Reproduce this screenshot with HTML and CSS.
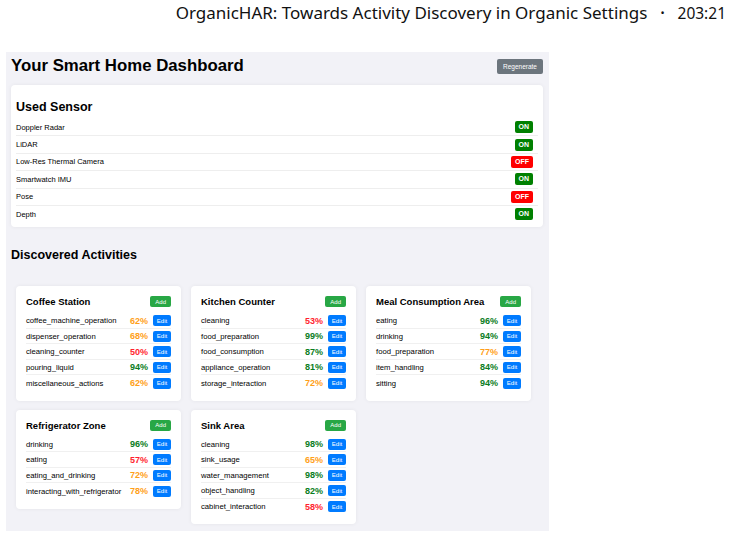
FILE: index.html
```html
<!DOCTYPE html>
<html lang="en">
<head>
    <meta charset="UTF-8">
    <title>Your Smart Home Dashboard</title>
    <link rel="stylesheet" href="styles.css">
</head>
<body>
    <div class="running-head">
        <span>OrganicHAR: Towards Activity Discovery in Organic Settings</span>
        <span class="dot">&bull;</span>
        <span>203:21</span>
    </div>

    <div class="dashboard">
        <div class="dash-head">
            <h1>Your Smart Home Dashboard</h1>
            <button class="btn-regen">Regenerate</button>
        </div>

        <div class="sensor-card">
            <h2>Used Sensor</h2>
            <div class="sensor-row"><span>Doppler Radar</span><span class="badge on">ON</span></div>
            <div class="sensor-row"><span>LiDAR</span><span class="badge on">ON</span></div>
            <div class="sensor-row"><span>Low-Res Thermal Camera</span><span class="badge off">OFF</span></div>
            <div class="sensor-row"><span>Smartwatch IMU</span><span class="badge on">ON</span></div>
            <div class="sensor-row"><span>Pose</span><span class="badge off">OFF</span></div>
            <div class="sensor-row"><span>Depth</span><span class="badge on">ON</span></div>
        </div>

        <h2 class="section-title">Discovered Activities</h2>

        <div class="activity-grid">
            <div class="area-card">
                <div class="area-head"><h3>Coffee Station</h3><button class="btn-add">Add</button></div>
                <div class="act-row"><span class="act-name">coffee_machine_operation</span><span class="pct mid">62%</span><button class="btn-edit">Edit</button></div>
                <div class="act-row"><span class="act-name">dispenser_operation</span><span class="pct mid">68%</span><button class="btn-edit">Edit</button></div>
                <div class="act-row"><span class="act-name">cleaning_counter</span><span class="pct low">50%</span><button class="btn-edit">Edit</button></div>
                <div class="act-row"><span class="act-name">pouring_liquid</span><span class="pct high">94%</span><button class="btn-edit">Edit</button></div>
                <div class="act-row"><span class="act-name">miscellaneous_actions</span><span class="pct mid">62%</span><button class="btn-edit">Edit</button></div>
            </div>

            <div class="area-card">
                <div class="area-head"><h3>Kitchen Counter</h3><button class="btn-add">Add</button></div>
                <div class="act-row"><span class="act-name">cleaning</span><span class="pct low">53%</span><button class="btn-edit">Edit</button></div>
                <div class="act-row"><span class="act-name">food_preparation</span><span class="pct high">99%</span><button class="btn-edit">Edit</button></div>
                <div class="act-row"><span class="act-name">food_consumption</span><span class="pct high">87%</span><button class="btn-edit">Edit</button></div>
                <div class="act-row"><span class="act-name">appliance_operation</span><span class="pct high">81%</span><button class="btn-edit">Edit</button></div>
                <div class="act-row"><span class="act-name">storage_interaction</span><span class="pct mid">72%</span><button class="btn-edit">Edit</button></div>
            </div>

            <div class="area-card">
                <div class="area-head"><h3>Meal Consumption Area</h3><button class="btn-add">Add</button></div>
                <div class="act-row"><span class="act-name">eating</span><span class="pct high">96%</span><button class="btn-edit">Edit</button></div>
                <div class="act-row"><span class="act-name">drinking</span><span class="pct high">94%</span><button class="btn-edit">Edit</button></div>
                <div class="act-row"><span class="act-name">food_preparation</span><span class="pct mid">77%</span><button class="btn-edit">Edit</button></div>
                <div class="act-row"><span class="act-name">item_handling</span><span class="pct high">84%</span><button class="btn-edit">Edit</button></div>
                <div class="act-row"><span class="act-name">sitting</span><span class="pct high">94%</span><button class="btn-edit">Edit</button></div>
            </div>

            <div class="area-card">
                <div class="area-head"><h3>Refrigerator Zone</h3><button class="btn-add">Add</button></div>
                <div class="act-row"><span class="act-name">drinking</span><span class="pct high">96%</span><button class="btn-edit">Edit</button></div>
                <div class="act-row"><span class="act-name">eating</span><span class="pct low">57%</span><button class="btn-edit">Edit</button></div>
                <div class="act-row"><span class="act-name">eating_and_drinking</span><span class="pct mid">72%</span><button class="btn-edit">Edit</button></div>
                <div class="act-row"><span class="act-name">interacting_with_refrigerator</span><span class="pct mid">78%</span><button class="btn-edit">Edit</button></div>
            </div>

            <div class="area-card">
                <div class="area-head"><h3>Sink Area</h3><button class="btn-add">Add</button></div>
                <div class="act-row"><span class="act-name">cleaning</span><span class="pct high">98%</span><button class="btn-edit">Edit</button></div>
                <div class="act-row"><span class="act-name">sink_usage</span><span class="pct mid">65%</span><button class="btn-edit">Edit</button></div>
                <div class="act-row"><span class="act-name">water_management</span><span class="pct high">98%</span><button class="btn-edit">Edit</button></div>
                <div class="act-row"><span class="act-name">object_handling</span><span class="pct high">82%</span><button class="btn-edit">Edit</button></div>
                <div class="act-row"><span class="act-name">cabinet_interaction</span><span class="pct low">58%</span><button class="btn-edit">Edit</button></div>
            </div>
        </div>
    </div>
</body>
</html>
```

FILE: styles.css
```css
body {
    margin: 0;
    background-color: #fff;
    font-family: "Liberation Sans", Arial, sans-serif;
    color: #000;
}
.running-head {
    display: flex;
    justify-content: flex-end;
    align-items: center;
    gap: 13px;
    height: 25px;
    padding-right: 6px;
    font-family: "Noto Sans", sans-serif;
    font-size: 17px;
    color: #111;
}
.running-head .dot {
    font-size: 11px;
}
.running-head span:last-child {
    font-size: 15.5px;
}
.dashboard {
    width: 532px;
    margin: 27px 0 0 6px;
    padding: 5px 6px 7px 5px;
    background-color: #f2f2f7;
}
.dash-head {
    display: flex;
    justify-content: space-between;
    align-items: center;
    height: 18px;
    margin-bottom: 10px;
}
.dash-head h1 {
    margin: 0;
    font-size: 16.8px;
    font-weight: bold;
}
.btn-regen {
    background-color: #6c757d;
    color: #fff;
    border: none;
    border-radius: 2px;
    font-family: inherit;
    font-size: 6.5px;
    padding: 0 6px;
    height: 15px;
}
.sensor-card {
    background-color: #fff;
    border-radius: 4px;
    padding: 15px 5px 5px 5px;
    box-shadow: 0 0 4px rgba(0, 0, 0, 0.06);
}
.sensor-card h2 {
    margin: 0 0 5px 0;
    font-size: 12.5px;
}
.sensor-row {
    display: flex;
    justify-content: space-between;
    align-items: center;
    padding: 2.2px 0;
    border-bottom: 1px solid #eee;
    font-size: 7.5px;
}
.sensor-row:last-child {
    border-bottom: none;
}
.badge {
    color: #fff;
    font-size: 7px;
    font-weight: bold;
    border-radius: 2px;
    height: 12px;
    line-height: 12px;
    padding: 0 4px;
    margin-right: 5px;
}
.badge.on {
    background-color: #008000;
}
.badge.off {
    background-color: #ff0000;
}
.section-title {
    font-size: 12.5px;
    margin: 21px 0 24px 0;
}
.activity-grid {
    display: grid;
    grid-template-columns: repeat(3, 165px);
    gap: 9px 10px;
    padding-left: 5px;
    align-items: start;
}
.area-card {
    background-color: #fff;
    border-radius: 4px;
    padding: 10px 10px 10px 10px;
    box-shadow: 0 0 4px rgba(0, 0, 0, 0.06);
}
.area-head {
    display: flex;
    justify-content: space-between;
    align-items: center;
    margin-bottom: 6px;
}
.area-head h3 {
    margin: 0;
    font-size: 9.5px;
}
.btn-add {
    background-color: #28a745;
    color: #fff;
    border: none;
    border-radius: 2px;
    font-family: inherit;
    font-size: 6px;
    height: 11px;
    padding: 0 5px;
}
.act-row {
    display: flex;
    align-items: center;
    gap: 5px;
    height: 15.5px;
    border-bottom: 1px solid #f0f0f0;
    font-size: 7.7px;
    box-sizing: border-box;
}
.act-row:last-child {
    border-bottom: none;
}
.act-name {
    flex: 1;
    white-space: nowrap;
}
.pct {
    font-weight: bold;
    font-size: 9px;
}
.pct.high {
    color: #0a7d22;
}
.pct.mid {
    color: #ff9f1a;
}
.pct.low {
    color: #ff1f2f;
}
.btn-edit {
    background-color: #007bff;
    color: #fff;
    border: none;
    border-radius: 2px;
    font-family: inherit;
    font-size: 6px;
    height: 11px;
    width: 18px;
    padding: 0;
}
```
